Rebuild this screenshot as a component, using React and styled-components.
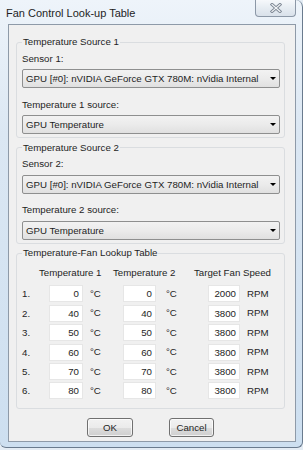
import styled, { createGlobalStyle } from "styled-components";

const GlobalStyle = createGlobalStyle`
  html, body {
    margin: 0;
    padding: 0;
  }
  body {
    width: 303px;
    height: 450px;
    overflow: hidden;
    background: #e4ecf4;
    font-family: "Liberation Sans", Arial, sans-serif;
    color: #1e1e1e;
  }
`;

const rows = [
  { t1: 0, t2: 0, fan: 2000 },
  { t1: 40, t2: 40, fan: 3800 },
  { t1: 50, t2: 50, fan: 3800 },
  { t1: 60, t2: 60, fan: 3800 },
  { t1: 70, t2: 70, fan: 3800 },
  { t1: 80, t2: 80, fan: 3800 },
];

const sources = [
  { n: 1, sensor: "GPU [#0]: nVIDIA GeForce GTX 780M: nVidia Internal", source: "GPU Temperature" },
  { n: 2, sensor: "GPU [#0]: nVIDIA GeForce GTX 780M: nVidia Internal", source: "GPU Temperature" },
];

const CloseIcon = () => (
  <svg width="12" height="10" viewBox="0 0 12 10">
    <path d="M2 1.5 L10 8.5 M10 1.5 L2 8.5" stroke="#7d8794" strokeWidth="3" strokeLinecap="square" fill="none" />
    <path d="M2 1.5 L10 8.5 M10 1.5 L2 8.5" stroke="#f4f6f8" strokeWidth="1.2" strokeLinecap="square" fill="none" />
  </svg>
);

export default function App() {
  return (
    <>
      <GlobalStyle />
      <Window>
        <TitleBar>
          <Title>Fan Control Look-up Table</Title>
          <CloseButton>
            <CloseIcon />
          </CloseButton>
        </TitleBar>
        <Client>
          {sources.map((s) => (
            <Group key={s.n}>
              <Legend>Temperature Source {s.n}</Legend>
              <FieldLabel $mt={4.5}>Sensor {s.n}:</FieldLabel>
              <Combo $mt={4.5}>
                <span>{s.sensor}</span>
                <Arrow />
              </Combo>
              <FieldLabel $mt={10.5}>Temperature {s.n} source:</FieldLabel>
              <Combo $mt={4.5}>
                <span>{s.source}</span>
                <Arrow />
              </Combo>
            </Group>
          ))}

          <Group $table>
            <Legend>Temperature-Fan Lookup Table</Legend>
            <HeaderRow>
              <span />
              <span>Temperature 1</span>
              <span>Temperature 2</span>
              <span>Target Fan Speed</span>
            </HeaderRow>
            <Table>
              {rows.map((r, i) => (
                <TableRow key={i}>
                  <span>{i + 1}.</span>
                  <NumBox>{r.t1}</NumBox>
                  <Unit $pl={7}>°C</Unit>
                  <NumBox>{r.t2}</NumBox>
                  <Unit $pl={10}>°C</Unit>
                  <NumBox>{r.fan}</NumBox>
                  <Unit $pl={7}>RPM</Unit>
                </TableRow>
              ))}
            </Table>
          </Group>

          <ButtonRow>
            <Button $w={46}>OK</Button>
            <Button $w={45}>Cancel</Button>
          </ButtonRow>
        </Client>
      </Window>
    </>
  );
}

const Window = styled.div`
  width: 303px;
  height: 448px;
  box-sizing: border-box;
  padding: 0 6px 0 8px;
  display: flex;
  flex-direction: column;
  background: linear-gradient(180deg, #eef4fa 0%, #dbe7f3 30%, #cddff0 100%);
  border-right: 1px solid #6a7b8e;
  border-bottom: 1px solid #6a7b8e;
  border-radius: 0 7px 6px 6px;
`;

const TitleBar = styled.div`
  height: 24px;
  display: flex;
  justify-content: space-between;
  align-items: flex-start;
`;

const Title = styled.div`
  margin: 7px 0 0 -2px;
  font-size: 11px;
  line-height: 13px;
`;

const CloseButton = styled.div`
  width: 41px;
  height: 17px;
  box-sizing: border-box;
  display: flex;
  align-items: center;
  justify-content: center;
  border: 1px solid #8c98a7;
  border-top: none;
  border-radius: 0 0 4px 4px;
  background: linear-gradient(180deg, #f6f8fb 0%, #e6ecf2 50%, #d9e1ea 100%);
`;

const Client = styled.div`
  width: 288px;
  height: 418px;
  box-sizing: border-box;
  padding: 11px 10px 0 7px;
  background: #f0f0f0;
  border: 1px solid #8e9aa8;
  display: flex;
  flex-direction: column;
`;

const Group = styled.fieldset`
  margin: 0 0 ${(p) => (p.$table ? 0 : 3.5)}px;
  padding: 0 4px ${(p) => (p.$table ? 7 : 3)}px 5px;
  min-width: 0;
  border: 1px solid #dadde0;
  border-radius: 3px;
`;

const Legend = styled.legend`
  padding: 0 1px;
  font-size: 9.7px;
  line-height: 12px;
`;

const FieldLabel = styled.div`
  margin-top: ${(p) => p.$mt}px;
  font-size: 9.7px;
  line-height: 12px;
`;

const Combo = styled.div`
  margin-top: ${(p) => p.$mt}px;
  height: 19px;
  box-sizing: border-box;
  padding: 0 3px;
  display: flex;
  align-items: center;
  justify-content: space-between;
  border: 1px solid #8e8f8f;
  border-radius: 2px;
  background: linear-gradient(180deg, #f2f2f2 0%, #ebebeb 50%, #e0e0e0 100%);
  font-size: 9.7px;
  white-space: nowrap;
`;

const Arrow = styled.span`
  width: 0;
  height: 0;
  border-left: 3px solid transparent;
  border-right: 3px solid transparent;
  border-top: 3px solid #000;
`;

const HeaderRow = styled.div`
  margin-top: 8px;
  display: grid;
  grid-template-columns: 17px 74px 81px 1fr;
  font-size: 9.7px;
  line-height: 12px;
  white-space: nowrap;
`;

const Table = styled.div`
  margin-top: 5.3px;
  display: flex;
  flex-direction: column;
`;

const TableRow = styled.div`
  height: 19.4px;
  display: grid;
  grid-template-columns: 27px 34px 40px 33px 52px 32px 1fr;
  align-items: center;
  font-size: 9.7px;
`;

const NumBox = styled.div`
  height: 17px;
  box-sizing: border-box;
  padding-right: 3px;
  display: flex;
  align-items: center;
  justify-content: flex-end;
  background: #fff;
  border: 1px solid #e6e6e6;
`;

const Unit = styled.span`
  padding-left: ${(p) => p.$pl}px;
  margin-top: -1px;
`;

const ButtonRow = styled.div`
  margin-top: 9px;
  display: flex;
  justify-content: center;
  gap: 36px;
`;

const Button = styled.div`
  width: ${(p) => p.$w}px;
  height: 19px;
  box-sizing: border-box;
  display: flex;
  align-items: center;
  justify-content: center;
  border: 1px solid #707070;
  border-radius: 3px;
  background: linear-gradient(180deg, #f2f2f2 0%, #ebebeb 50%, #dddddd 51%, #cfcfcf 100%);
  box-shadow: inset 0 0 0 1px rgba(255, 255, 255, 0.7);
  font-size: 9.7px;
`;
